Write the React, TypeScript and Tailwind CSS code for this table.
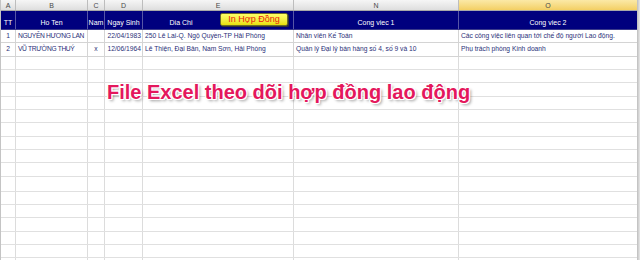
import React from "react";

const W = ["w-[15px]", "w-[72px]", "w-[17px]", "w-[38px]", "w-[151px]", "w-[165px]", "w-[179px]"];
const LETTERS = ["A", "B", "C", "D", "E", "N", "O"];

const extraHeights = [13, 13, 14, 13, 13, 14, 13, 13, 14, 15, 13, 13, 14, 13, 13, 13];
const hClass: Record<number, string> = { 13: "h-[13px]", 14: "h-[14px]", 15: "h-[15px]" };

const font = "font-['Liberation_Sans',Arial,sans-serif]";

function DataRow({ cells, h }: { cells: { t: string; a?: string }[]; h: string }) {
  return (
    <div className={`flex ${h} shrink-0 border-b border-[#d4d4d4]`}>
      {cells.map((c, i) => (
        <div
          key={i}
          className={`${W[i]} shrink-0 border-r border-[#d4d4d4] flex items-center overflow-hidden whitespace-nowrap text-[6.7px] leading-none text-[#2a2f78] ${
            i === 1 ? "tracking-[-0.35px]" : ""
          } ${c.a ?? "justify-start pl-[2px]"}`}
        >
          {c.t}
        </div>
      ))}
    </div>
  );
}

export default function App() {
  const row1 = [
    { t: "1", a: "justify-center" },
    { t: "NGUYỄN HƯƠNG LAN" },
    { t: "", a: "justify-center" },
    { t: "22/04/1983", a: "justify-end pr-[1px]" },
    { t: "250 Lê Lai-Q. Ngộ Quyền-TP Hải Phòng" },
    { t: "Nhân viên Kế Toán" },
    { t: "Các công việc liên quan tới chế độ người Lao động." },
  ];
  const row2 = [
    { t: "2", a: "justify-center" },
    { t: "VŨ TRƯỜNG THUÝ" },
    { t: "x", a: "justify-center" },
    { t: "12/06/1964", a: "justify-end pr-[1px]" },
    { t: "Lê Thiện, Đại Bản, Nam Sơn, Hải Phòng" },
    { t: "Quản lý Đại lý bán hàng số 4, số 9 và 10" },
    { t: "Phụ trách phòng Kinh doanh" },
  ];
  const headers = ["TT", "Ho Ten", "Nam", "Ngay Sinh", "", "Cong viec 1", "Cong viec 2"];

  return (
    <div className={`relative w-[640px] h-[260px] overflow-hidden bg-white ${font}`}>
      <div className="flex h-full">
        <div className="w-[637px] border-l border-[#c4c4c4] flex flex-col">
          {/* column letters */}
          <div className="flex h-[11px] shrink-0 border-b border-[#a8a8a8]">
            {LETTERS.map((l, i) => (
              <div
                key={l}
                className={`${W[i]} shrink-0 border-r border-[#bdbdbd] flex items-center justify-center text-[7px] leading-none text-[#4a4a4a] ${
                  l === "O"
                    ? "bg-gradient-to-b from-[#fbe9a6] to-[#f3cf62]"
                    : "bg-gradient-to-b from-[#f6f6f6] to-[#dedede]"
                }`}
              >
                {l}
              </div>
            ))}
          </div>
          {/* blue header */}
          <div className="flex h-[19px] shrink-0 bg-[#00007e] border-b border-[#3a3a8a]">
            {headers.map((h, i) => (
              <div
                key={i}
                className={`${W[i]} shrink-0 border-r border-[#5656a6] flex items-end pb-[3px] text-[7px] leading-none text-white whitespace-nowrap ${
                  i === 4 ? "justify-start" : "justify-center"
                }`}
              >
                {i === 4 ? <span className="w-[76px] text-center">Dia Chi</span> : h}
              </div>
            ))}
          </div>
          <DataRow cells={row1} h="h-[13px]" />
          <DataRow cells={row2} h="h-[14px]" />
          {extraHeights.map((hh, r) => (
            <div key={r} className={`flex ${hClass[hh]} shrink-0 border-b border-[#e0e0e0]`}>
              {W.map((w, i) => (
                <div key={i} className={`${w} shrink-0 border-r border-[#dcdcdc]`} />
              ))}
            </div>
          ))}
        </div>
        <div className="w-[3px] bg-gradient-to-r from-[#bdbdbd] to-[#e8e8e8]" />
      </div>

      {/* In Hop Dong button */}
      <div className="absolute left-[220px] top-[13px] w-[68px] h-[13px] rounded-[2px] border border-[#6b6b2a] bg-gradient-to-b from-[#ffff66] to-[#e8e000] shadow-[1px_1px_0_#333] flex items-center justify-center text-[9px] leading-none text-[#e8240c] whitespace-nowrap">
        In Hợp Đồng
      </div>

      {/* overlay caption */}
      <div className="absolute left-[107px] top-[80px] text-[20px] leading-[24px] font-bold whitespace-nowrap text-[#e4175c] [text-shadow:-1px_-1px_0_#fff,1px_-1px_0_#fff,-1px_1px_0_#fff,1px_1px_0_#fff,0_1px_0_#fff,0_-1px_0_#fff,1px_0_0_#fff,-1px_0_0_#fff,2px_2px_3px_rgba(0,0,0,0.4)]">
        File Excel theo dõi hợp đồng lao động
      </div>
    </div>
  );
}
